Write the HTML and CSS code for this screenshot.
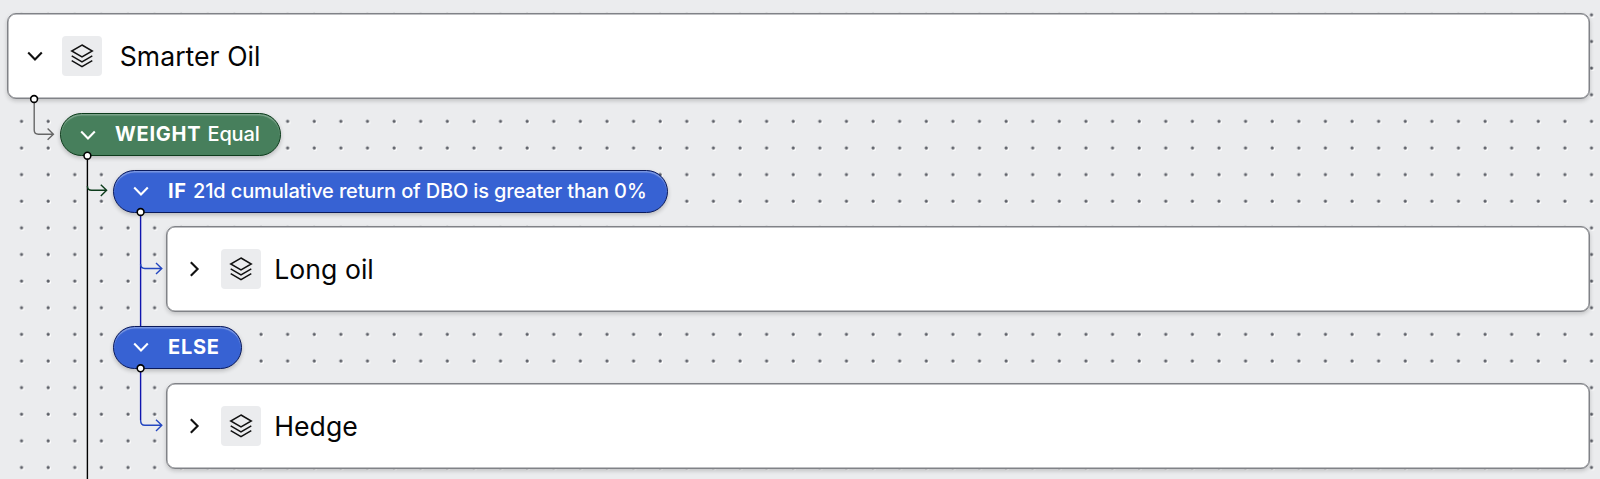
FILE: index.html
```html
<!DOCTYPE html>
<html lang="en">
<head>
<meta charset="utf-8">
<title>Smarter Oil</title>
<link rel="stylesheet" href="styles.css">
</head>
<body>
<svg class="defs" width="0" height="0" aria-hidden="true">
  <symbol id="down" viewBox="0 0 16 16"><path d="M1.2 4.6 8 11.4l6.8-6.8"/></symbol>
  <symbol id="right" viewBox="0 0 16 16"><path d="M4.8 1.2 11.6 8l-6.8 6.8"/></symbol>
  <symbol id="layers" viewBox="0 0 24 24"><path d="M12 1 22.3 7 12 13 1.7 7zM1.7 11.8 12 17.8l10.3-6M1.7 16.7 12 22.7l10.3-6"/></symbol>
</svg>
<main class="canvas">
  <section class="card level-0">
    <svg class="chevron"><use href="#down"/></svg>
    <span class="tile"><svg class="layers"><use href="#layers"/></svg></span>
    <h1 class="title">Smarter Oil</h1>
  </section>
  <div class="pill weight level-1">
    <svg class="chevron"><use href="#down"/></svg>
    <span class="label"><b>WEIGHT</b> Equal</span>
  </div>
  <div class="pill condition if level-2">
    <svg class="chevron"><use href="#down"/></svg>
    <span class="label"><b>IF</b> 21d cumulative return of DBO is greater than 0%</span>
  </div>
  <section class="card level-3">
    <svg class="chevron"><use href="#right"/></svg>
    <span class="tile"><svg class="layers"><use href="#layers"/></svg></span>
    <h2 class="title">Long oil</h2>
  </section>
  <div class="pill condition else level-2">
    <svg class="chevron"><use href="#down"/></svg>
    <span class="label"><b>ELSE</b></span>
  </div>
  <section class="card level-3">
    <svg class="chevron"><use href="#right"/></svg>
    <span class="tile"><svg class="layers"><use href="#layers"/></svg></span>
    <h2 class="title">Hedge</h2>
  </section>
  <svg class="connectors" viewBox="0 0 1600 479" aria-hidden="true">
    <g class="root-line"><path d="M34.2 99v31q0 4.2 4.2 4.2H53M47.6 128.6l5.8 5.6-5.8 5.6"/></g>
    <g class="weight-line"><path class="trunk" d="M87.4 156V479"/><path class="branch" d="M87.4 186q0 4.3 4.2 4.3H106M100.8 184.7l5.8 5.6-5.8 5.6"/></g>
    <g class="condition-line"><path class="trunk" d="M140.6 212V326M140.6 368v52"/><path class="branch" d="M140.6 264q0 4.5 4.2 4.5H161.5M156 262.9l5.8 5.6-5.8 5.6M140.6 420q0 5.3 4.2 5.3H161.5M156 419.7l5.8 5.6-5.8 5.6"/></g>
    <g class="nodes"><circle cx="34.1" cy="99" r="3.4"/><circle cx="87.4" cy="155.7" r="3.4"/><circle cx="140.6" cy="212" r="3.4"/><circle cx="140.6" cy="368.3" r="3.4"/></g>
  </svg>
</main>
</body>
</html>
```
FILE: styles.css
```css
* { box-sizing: border-box; }
body { margin: 0; font-family: Inter, "Liberation Sans", sans-serif; }
.defs { position: absolute; }

.canvas {
  position: relative;
  display: flex;
  flex-direction: column;
  align-items: flex-start;
  gap: 13.65px;
  height: 479px;
  padding: 13.4px 10.5px 0 7px;
  overflow: hidden;
  background-color: #ebecee;
  background-image:
    radial-gradient(circle at 13px 13px, #50535b 0, #686b72 1.1px, rgba(111, 114, 121, 0) 2.1px),
    radial-gradient(circle at 14px 14px, #fff 0, #fff 1.3px, rgba(255, 255, 255, 0) 2.2px);
  background-size: 26.61px 26.63px;
  background-position: 8.6px 1.9px;
}

.level-1 { margin-left: 53px; }
.level-2 { margin-left: 106px; }
.level-3 { margin-left: 159.4px; }

.card {
  flex: none;
  align-self: stretch;
  display: flex;
  align-items: center;
  height: 86px;
  padding-left: 18.8px;
  border: 1px solid #808287;
  border-radius: 9px;
  background: #fff;
  box-shadow: inset 0 0 0 .5px #808287, 0 2px 4px rgba(0, 0, 0, .18);
}
.card.level-3 { padding-left: 18.8px; }
.chevron { flex: none; width: 16px; height: 16px; fill: none; stroke: #111; stroke-width: 2.1; overflow: visible; }
.tile {
  display: grid;
  place-items: center;
  width: 40px;
  height: 40px;
  margin-left: 18.8px;
  border-radius: 4px;
  background: #ebecee;
}
.layers { width: 24px; height: 24px; fill: none; stroke: #111; stroke-width: 1.45; }
.title {
  margin: 0 0 1px 18.2px;
  font-size: 26.6px;
  line-height: 36px;
  font-weight: 400;
  letter-spacing: .03px;
  color: #050505;
}
.level-3 .title { margin: 0 0 0 13.3px; }

.pill {
  flex: none;
  display: flex;
  align-items: center;
  height: 43px;
  padding-left: 19.4px;
  border: 1px solid;
  border-radius: 22px;
  color: #fff;
}
.pill .chevron { stroke: #fff; }
.label { margin: 0 0 1px 18.6px; font-size: 20px; line-height: 28px; font-weight: 500; letter-spacing: -.15px; white-space: pre; }
.label b { margin-right: 1px; font-weight: 700; letter-spacing: .75px; }
.weight {
  width: 221px;
  background: #477f5c;
  border-color: #0d3c1c;
  box-shadow: inset 0 1.6px 1px rgba(255, 255, 255, .3), 0 2px 4px rgba(0, 0, 0, .22);
}
.condition {
  background: #3762d3;
  border-color: #0a1a5c;
  box-shadow: inset 0 1.6px 1px rgba(255, 255, 255, .35), 0 2px 4px rgba(0, 0, 0, .22);
}
.if { width: 555px; }
.else { width: 129px; }

.connectors { position: absolute; inset: 0; width: 1600px; height: 479px; fill: none; stroke-width: 1.4; }
.root-line { stroke: #666; }
.weight-line .trunk { stroke: #000; }
.weight-line .branch { stroke: #0d3c1c; }
.condition-line .trunk { stroke: #1015ae; }
.condition-line .branch { stroke: #2447c0; }
.nodes { fill: #fff; stroke: #000; stroke-width: 1.6; }
```
